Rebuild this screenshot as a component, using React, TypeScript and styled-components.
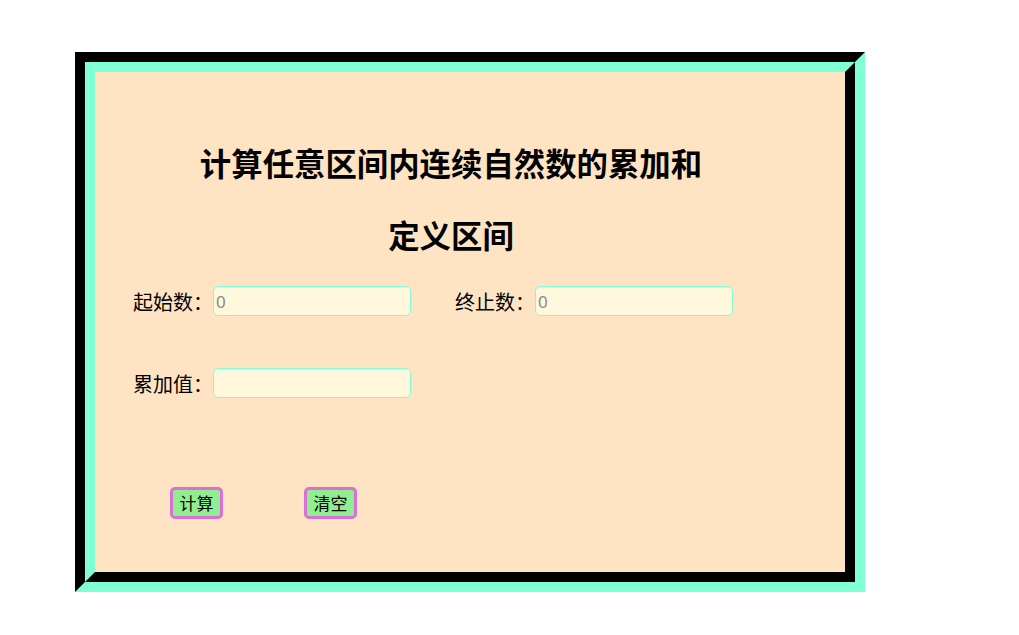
import styled, { createGlobalStyle } from 'styled-components'

const GlobalStyle = createGlobalStyle`
    body {
        margin: 0;
        background: #ffffff;
        font-family: "Noto Sans", "Noto Sans CJK SC", sans-serif;
    }
`;

const OuterFrame = styled.div`
    width: 770px;
    margin: 52px 0 0 75px;
    border: 10px solid;
    border-color: #000000 #7fffd4 #7fffd4 #000000;
`;

const InnerFrame = styled.div`
    height: 500px;
    border: 10px solid;
    border-color: #7fffd4 #000000 #000000 #7fffd4;
    background: #ffe4c4;
    padding: 0 76px 0 38px;
    box-sizing: content-box;
    width: 636px;
`;

const Title = styled.h1<{ $top: number }>`
    margin: ${p => p.$top}px 0 0;
    font-size: 31.4px;
    line-height: 40px;
    font-weight: 700;
    text-align: center;
    color: #000000;
`;

const Row = styled.div<{ $top: number }>`
    display: flex;
    align-items: center;
    margin-top: ${p => p.$top}px;
`;

const Field = styled.label`
    display: flex;
    align-items: center;
    font-size: 20px;
    color: #000000;
    & + & {
        margin-left: 44px;
    }
`;

const Input = styled.input`
    width: 198px;
    height: 30px;
    box-sizing: border-box;
    border: 1px solid #7fffd4;
    border-radius: 5px;
    background: #fff8dc;
    padding: 0 2px;
    font-family: "Noto Sans", sans-serif;
    font-size: 17px;
    outline: none;
    &::placeholder {
        color: #8a8a8a;
    }
`;

const Buttons = styled.div`
    display: flex;
    gap: 81px;
    margin: 89px 0 0 37px;
`;

const Button = styled.button`
    width: 53px;
    height: 32px;
    box-sizing: border-box;
    border: 3px solid #da70d6;
    border-radius: 5px;
    background: #90ee90;
    padding: 0;
    font-family: "Noto Sans CJK SC", sans-serif;
    font-size: 17px;
    line-height: 24px;
    color: #000000;
    cursor: pointer;
`;

export default function App() {
    return (
        <>
            <GlobalStyle />
            <OuterFrame>
                <InnerFrame>
                    <Title $top={72}>计算任意区间内连续自然数的累加和</Title>
                    <Title $top={32}>定义区间</Title>
                    <Row $top={30}>
                        <Field>起始数：<Input type="text" placeholder="0" /></Field>
                        <Field>终止数：<Input type="text" placeholder="0" /></Field>
                    </Row>
                    <Row $top={52}>
                        <Field>累加值：<Input type="text" /></Field>
                    </Row>
                    <Buttons>
                        <Button>计算</Button>
                        <Button>清空</Button>
                    </Buttons>
                </InnerFrame>
            </OuterFrame>
        </>
    )
}
